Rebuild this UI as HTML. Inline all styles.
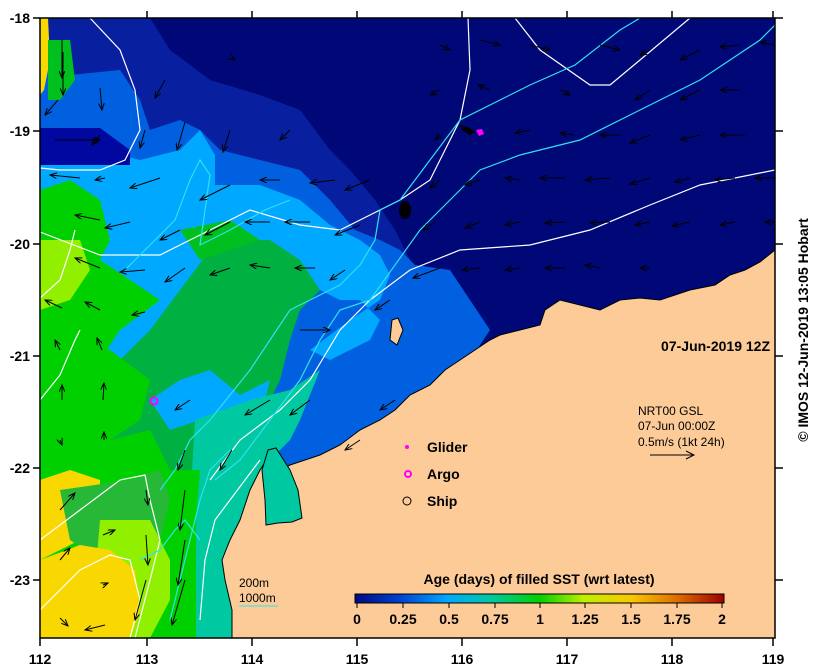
<!DOCTYPE html>
<html><head><meta charset="utf-8"><style>
html,body{margin:0;padding:0;background:#fff;width:818px;height:672px;overflow:hidden}
svg{display:block;font-family:"Liberation Sans",sans-serif}
.t{font-weight:bold;font-size:14px;fill:#000}
</style></head><body>
<svg width="818" height="672" viewBox="0 0 818 672">
<defs>
<clipPath id="c"><rect x="40" y="18" width="735" height="620"/></clipPath>
<marker id="ah" markerWidth="8" markerHeight="6" refX="7" refY="3" orient="auto" markerUnits="userSpaceOnUse"><path d="M0,0 L7,3 L0,6" fill="none" stroke="#000" stroke-width="1"/></marker>
<linearGradient id="cb" x1="0" x2="1">
<stop offset="0" stop-color="#000a80"/><stop offset="0.12" stop-color="#0040d0"/><stop offset="0.25" stop-color="#00a8ff"/><stop offset="0.37" stop-color="#00c8a0"/><stop offset="0.5" stop-color="#00d000"/><stop offset="0.62" stop-color="#c0f000"/><stop offset="0.75" stop-color="#f8c800"/><stop offset="0.87" stop-color="#e07000"/><stop offset="1" stop-color="#a00000"/>
</linearGradient>
</defs>
<g clip-path="url(#c)">
<rect x="40" y="18" width="735" height="620" fill="#000878"/>
<path d="M40,18 L150,18 L170,50 L210,80 L260,95 L300,110 L330,150 L350,170 L375,200 L395,230 L410,260 L400,300 L380,330 L300,340 L40,340Z" fill="#0820a0"/>
<path d="M40,40 L70,40 L70,75 L120,70 L140,100 L150,130 L180,120 L200,130 L220,150 L260,160 L300,170 L330,200 L355,230 L380,240 L400,250 L415,265 L450,270 L470,300 L490,330 L470,360 L430,390 L390,420 L340,450 L300,470 L265,500 L40,500Z" fill="#0060e0"/>
<path d="M40,160 L100,150 L140,160 L180,150 L200,130 L215,155 L215,185 L260,185 L300,200 L330,225 L360,240 L380,255 L390,275 L380,300 L350,320 L330,335 L310,350 L330,360 L370,340 L380,320 L360,300 L340,300 L320,290 L300,300 L290,310 L270,380 L250,420 L230,440 L200,450 L150,420 L120,400 L40,380Z" fill="#00a8ff"/>
<path d="M40,95 L90,95 L110,100 L100,125 L40,130Z" fill="#0060e0"/>
<path d="M40,128 L100,128 L130,150 L130,165 L40,165Z" fill="#0008a0"/>
<path d="M40,380 L120,360 L150,330 L180,290 L210,250 L230,240 L270,240 L300,260 L320,290 L300,310 L290,340 L280,380 L270,400 L260,420 L250,440 L240,470 L225,520 L200,540 L160,540 L40,500Z" fill="#00b040"/>
<path d="M180,230 L230,220 L260,240 L230,250 L200,260Z" fill="#00c020"/>
<path d="M150,400 L180,380 L210,370 L240,395 L270,380 L260,420 L230,430 L200,420 L170,430Z" fill="#00a8ff"/>
<!-- base for bottom-left water -->
<path d="M150,450 L260,440 L260,638 L150,638Z" fill="#00b040"/>
<path d="M195,420 L250,400 L290,390 L320,370 L300,420 L290,440 L270,460 L260,480 L250,510 L245,560 L245,638 L195,638 L192,560 L188,510 L192,470Z" fill="#00c8a0"/>
<path d="M40,190 L70,180 L100,200 L110,240 L100,260 L130,280 L160,300 L120,330 L100,360 L60,360 L40,350Z" fill="#00d000"/>
<path d="M40,240 L80,240 L90,270 L70,300 L40,310Z" fill="#90f000"/>
<path d="M40,330 L110,350 L150,380 L140,420 L110,440 L40,440Z" fill="#00d000"/>
<path d="M40,440 L110,440 L150,430 L170,470 L200,470 L196,520 L196,638 L40,638Z" fill="#00d000"/>
<path d="M40,480 L70,470 L100,480 L100,520 L80,540 L40,560Z" fill="#f8d800"/>
<path d="M60,490 L130,480 L160,470 L170,500 L160,540 L130,560 L100,560 L70,540Z" fill="#28b838"/>
<path d="M100,520 L150,520 L170,560 L170,600 L150,638 L90,638 Z" fill="#90f000"/>
<path d="M40,560 L80,545 L110,550 L135,570 L140,610 L130,638 L40,638Z" fill="#f8d800"/>
<path d="M40,18 L48,18 L50,60 L44,90 L40,95Z" fill="#f8d800"/>
<path d="M48,40 L70,40 L75,80 L60,100 L48,100Z" fill="#00c020"/>
<path d="M775,250 L760,262 L745,270 L730,275 L715,285 L690,290 L660,300 L640,298 L620,300 L600,310 L560,300 L545,310 L540,325 L520,330 L500,335 L490,340 L475,350 L460,360 L445,370 L430,385 L410,395 L395,410 L380,420 L360,430 L340,445 L320,455 L305,460 L290,465 L280,470 L270,455 L260,470 L250,490 L240,520 L230,540 L222,560 L225,580 L232,610 L232,638 L775,638Z" fill="#fccb98" stroke="#000" stroke-width="1"/>
<path d="M268,450 L276,448 L290,470 L298,490 L302,518 L292,522 L278,523 L266,525 L265,500 L262,470Z" fill="#00c8a0" stroke="#000" stroke-width="1"/>
<path d="M392,320 L398,318 L403,330 L397,345 L390,340Z" fill="#fccb98" stroke="#000"/>
<g fill="none" stroke="#fff" stroke-width="1.2">
<path d="M90,18 L120,50 L135,90 L140,130 L125,160 L100,170 L60,170 L40,168"/>
<path d="M40,232 L100,255 L160,255 L210,230 L250,210 L300,225 L340,230 L370,215 L400,200 L430,180 L460,120 L470,70 L468,18"/>
<path d="M515,18 L540,50 L590,85 L610,85 L640,60 L690,18"/>
<path d="M340,330 L370,300 L410,270 L460,250 L530,245 L590,230 L650,205 L700,185 L775,170"/>
<path d="M40,298 L60,280 L70,250 L75,230"/>
<path d="M40,400 L60,375 L75,340 L80,330"/>
<path d="M210,480 L240,440 L280,410 L310,380 L340,330"/>
<path d="M200,620 L205,560 L215,520 L230,500 L260,460"/>
<path d="M40,540 L80,510 L120,480 L145,475 L150,500 L160,540 L150,580 L135,638"/>
<path d="M40,610 L80,570 L110,555 L130,560 L140,600 L130,638"/>
</g>
<g fill="none" stroke="#30e0f0" stroke-width="1.2">
<path d="M125,270 L145,250 L175,220 L190,180 L200,160 L210,175 L205,210 L200,245 L230,230 L265,210 L290,200"/>
<path d="M160,490 L175,470 L190,440 L210,420 L230,395 L250,370 L270,340 L290,310 L310,300 L340,285 L360,265 L375,240 L380,210 L400,200 L430,160 L460,120 L500,100 L530,85 L575,65 L620,30 L640,18"/>
<path d="M215,480 L240,460 L270,420 L300,380 L320,340 L340,310 L370,300 L420,230 L480,170 L520,155 L580,140 L640,110 L700,80 L760,40 L775,25"/>
<path d="M140,560 L160,550 L175,530 L185,520 L200,540"/>
<path d="M230,450 L210,470 L200,500 L190,540 L180,580 L170,620"/>
</g>
<g stroke="#000" stroke-width="1" marker-end="url(#ah)">
<path d="M62,40 L62,78"/><path d="M63,52 L63,95"/><path d="M100,88 L102,110"/><path d="M165,80 L155,98"/><path d="M232,58 L235,60"/>
<path d="M58,100 L45,115"/><path d="M55,140 L100,140"/><path d="M100,135 L92,145"/><path d="M145,130 L140,148"/><path d="M185,122 L177,150"/>
<path d="M230,130 L223,152"/><path d="M290,130 L280,140"/><path d="M80,178 L50,175"/><path d="M105,178 L95,180"/><path d="M160,178 L130,188"/>
<path d="M230,185 L200,200"/><path d="M280,180 L260,180"/><path d="M335,180 L310,183"/><path d="M370,180 L345,190"/><path d="M100,220 L75,215"/>
<path d="M130,222 L105,228"/><path d="M180,230 L160,240"/><path d="M230,222 L205,235"/><path d="M270,222 L245,222"/><path d="M310,222 L285,222"/>
<path d="M360,225 L335,235"/><path d="M100,268 L75,258"/><path d="M145,270 L120,272"/><path d="M185,268 L165,282"/><path d="M230,268 L210,275"/>
<path d="M270,268 L250,265"/><path d="M315,268 L295,268"/><path d="M345,270 L330,280"/><path d="M62,308 L45,300"/><path d="M100,310 L85,302"/>
<path d="M145,312 L132,315"/><path d="M300,330 L330,330"/><path d="M390,300 L375,310"/><path d="M60,350 L55,340"/><path d="M102,350 L97,338"/>
<path d="M62,400 L62,385"/><path d="M103,400 L104,383"/><path d="M190,400 L175,410"/><path d="M270,400 L245,415"/><path d="M310,400 L290,415"/>
<path d="M60,440 L62,445"/><path d="M104,440 L104,432"/><path d="M185,450 L178,470"/><path d="M232,450 L220,470"/><path d="M185,490 L180,530"/>
<path d="M146,490 L148,505"/><path d="M60,510 L75,493"/><path d="M103,535 L115,530"/><path d="M146,535 L148,565"/><path d="M185,540 L178,585"/>
<path d="M60,560 L70,548"/><path d="M103,585 L108,583"/><path d="M146,580 L135,620"/><path d="M185,580 L172,625"/><path d="M60,618 L68,626"/>
<path d="M105,625 L85,630"/><path d="M440,45 L450,50"/><path d="M480,40 L500,45"/><path d="M530,45 L550,50"/><path d="M600,45 L620,50"/>
<path d="M650,50 L640,55"/><path d="M700,50 L680,60"/><path d="M740,45 L720,47"/><path d="M775,45 L760,42"/><path d="M440,90 L430,95"/>
<path d="M490,90 L478,85"/><path d="M560,90 L570,95"/><path d="M650,90 L635,100"/><path d="M700,90 L680,100"/><path d="M740,90 L720,90"/>
<path d="M440,135 L435,140"/><path d="M530,130 L515,133"/><path d="M575,135 L560,133"/><path d="M620,135 L600,135"/><path d="M650,135 L630,143"/>
<path d="M700,135 L680,140"/><path d="M745,135 L720,135"/><path d="M440,180 L430,188"/><path d="M480,180 L465,185"/><path d="M520,180 L505,178"/>
<path d="M565,178 L540,178"/><path d="M610,178 L585,180"/><path d="M650,178 L630,184"/><path d="M690,178 L675,182"/><path d="M735,178 L715,180"/>
<path d="M775,178 L755,178"/><path d="M435,222 L423,230"/><path d="M480,222 L465,228"/><path d="M520,222 L505,225"/><path d="M565,222 L545,223"/>
<path d="M610,222 L590,223"/><path d="M650,222 L635,225"/><path d="M690,222 L672,226"/><path d="M735,222 L720,225"/><path d="M775,222 L765,222"/>
<path d="M440,268 L413,278"/><path d="M480,268 L462,270"/><path d="M520,268 L505,270"/><path d="M565,268 L545,268"/><path d="M600,268 L585,265"/>
<path d="M650,268 L640,268"/><path d="M395,400 L380,410"/><path d="M360,440 L345,450"/>
</g>
<ellipse cx="405" cy="210" rx="6" ry="9" fill="#000"/>
<path d="M460,125 L470,128 L475,132 L470,135 L462,130Z" fill="#000"/>
<path d="M476,130 L482,129 L484,134 L479,136Z" fill="#ff00ff"/>
<circle cx="154" cy="401" r="3.5" fill="none" stroke="#ff00ff" stroke-width="2"/>
</g>
<rect x="40" y="18" width="735" height="620" fill="none" stroke="#000" stroke-width="1.5"/>
<g stroke="#000" stroke-width="1.5">
<path d="M40,638 V646 M147,638 V646 M252,638 V646 M357,638 V646 M462,638 V646 M567,638 V646 M672,638 V646 M773,638 V646"/>
<path d="M147,18 V11 M252,18 V11 M357,18 V11 M462,18 V11 M567,18 V11 M672,18 V11 M773,18 V11"/>
<path d="M40,18 H33 M40,131 H33 M40,244 H33 M40,356 H33 M40,468 H33 M40,580 H33"/>
<path d="M775,18 H783 M775,131 H783 M775,244 H783 M775,356 H783 M775,468 H783 M775,580 H783"/>
</g>
<g class="t" text-anchor="middle">
<text x="40" y="664">112</text><text x="147" y="664">113</text><text x="252" y="664">114</text><text x="357" y="664">115</text><text x="462" y="664">116</text><text x="567" y="664">117</text><text x="672" y="664">118</text><text x="773" y="664">119</text>
</g>
<g class="t" text-anchor="end">
<text x="30" y="23">-18</text><text x="30" y="136">-19</text><text x="30" y="249">-20</text><text x="30" y="361">-21</text><text x="30" y="473">-22</text><text x="30" y="585">-23</text>
</g>
<text x="770" y="351" class="t" text-anchor="end">07-Jun-2019 12Z</text>
<g font-size="12" fill="#000">
<text x="638" y="415">NRT00 GSL</text>
<text x="638" y="430">07-Jun 00:00Z</text>
<text x="638" y="446">0.5m/s (1kt 24h)</text>
<text x="239" y="587">200m</text>
<text x="239" y="602">1000m</text>
</g>
<path d="M650,455 L694,455 M686,451 L694,455 L686,459" stroke="#000" fill="none"/>
<path d="M239,606 L278,606" stroke="#30e0f0"/>
<g class="t" font-size="13">
<text x="427" y="452">Glider</text><text x="427" y="479">Argo</text><text x="427" y="506">Ship</text>
</g>
<circle cx="407" cy="447" r="2" fill="#ff00ff"/>
<circle cx="408" cy="474" r="3" fill="none" stroke="#ff00ff" stroke-width="2"/>
<circle cx="407" cy="501" r="4" fill="none" stroke="#000"/>
<text x="539" y="584" class="t" font-size="13" text-anchor="middle">Age (days) of filled SST (wrt latest)</text>
<rect x="355" y="594" width="369" height="9" fill="url(#cb)" stroke="#000"/>
<g stroke="#000"><path d="M357,603 V608 M403,603 V608 M449,603 V608 M495,603 V608 M540,603 V608 M585,603 V608 M631,603 V608 M677,603 V608 M722,603 V608"/></g>
<g class="t" font-size="13" text-anchor="middle">
<text x="357" y="624">0</text><text x="403" y="624">0.25</text><text x="449" y="624">0.5</text><text x="495" y="624">0.75</text><text x="540" y="624">1</text><text x="585" y="624">1.25</text><text x="631" y="624">1.5</text><text x="677" y="624">1.75</text><text x="722" y="624">2</text>
</g>
<text transform="translate(808,330) rotate(-90)" class="t" font-size="13" text-anchor="middle">© IMOS 12-Jun-2019 13:05 Hobart</text>
</svg>
</body></html>
